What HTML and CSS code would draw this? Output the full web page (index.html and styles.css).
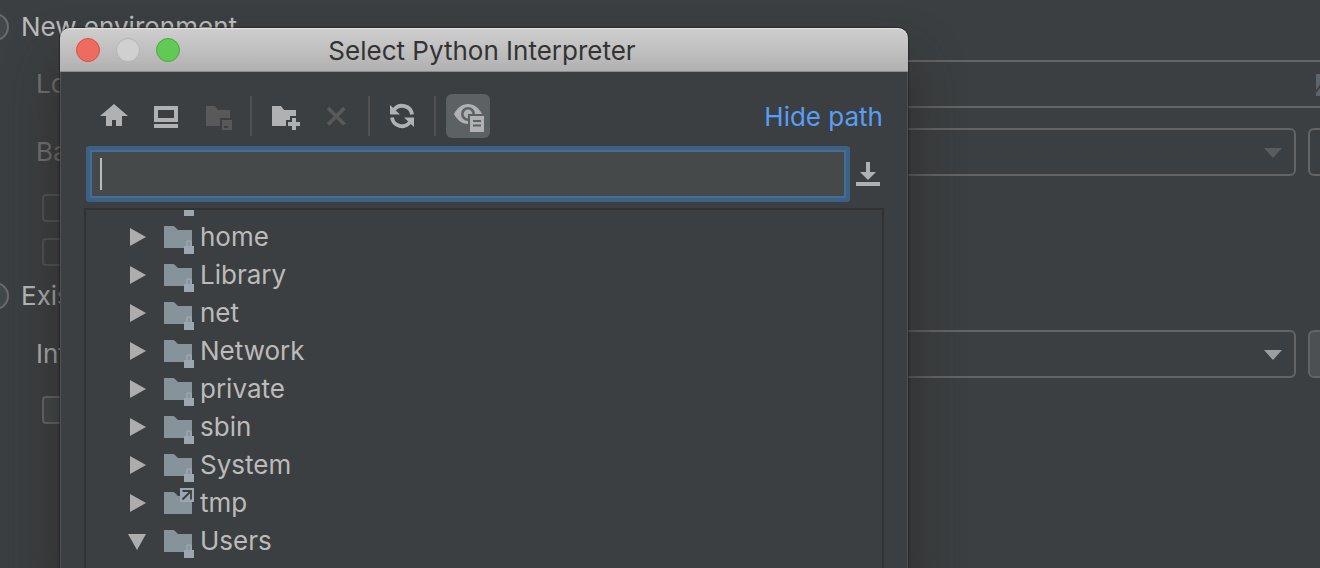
FILE: index.html
```
<!DOCTYPE html>
<html lang="en">
<head>
    <meta charset="UTF-8">
    <meta name="viewport" content="width=device-width, initial-scale=1.0">
    <title>Select Python Interpreter</title>
    <link rel="stylesheet" href="styles.css">
</head>
<body>
    <!-- Shared shapes for the tree -->
    <svg class="defs" width="0" height="0" aria-hidden="true">
        <symbol id="folder-locked" viewBox="0 0 32 38">
            <path fill="#87939a" d="M2 8H11Q12 8 13 9L16 12H30V30H2Z"/>
            <path fill="none" stroke="#9aa7b0" stroke-width="1.6" d="M24.8 29V25Q24.8 22.8 27 22.8T29.2 25V29"/>
            <path fill="#9aa7b0" d="M22 28H32V36H22Z"/>
        </symbol>
        <symbol id="folder-link" viewBox="0 0 32 38">
            <path fill="#87939a" d="M2 8H11Q12 8 13 9L16 12H30V30H2Z"/>
            <path fill="#9aa7b0" d="M18 4H32V18H18Z"/>
            <path fill="none" stroke="#3c3f41" stroke-width="1.8" d="M20.5 15.5L28.5 7.5M20.5 7H29V15.5"/>
        </symbol>
        <symbol id="arrow-right" viewBox="0 0 20 20">
            <path fill="#adadad" d="M2 1L18 10L2 19Z"/>
        </symbol>
        <symbol id="arrow-down" viewBox="0 0 20 20">
            <path fill="#adadad" d="M0 3H18L9 19Z"/>
        </symbol>
        <symbol id="combo-arrow" viewBox="0 0 18 10">
            <path fill="currentColor" d="M0 0H18L9 10Z"/>
        </symbol>
    </svg>

    <form class="settings">
        <div class="choice">
            <input type="radio" name="env" id="env-new">
            <label for="env-new">New environment</label>
        </div>
        <div class="field field-wide disabled">
            <label for="location">Location:</label>
            <div class="field-box">
                <input type="text" id="location" disabled>
                <svg class="browse" width="24" height="22" viewBox="0 0 24 22"><path fill="#5b666c" d="M0 0H24V22H0Z"/><path stroke="#3c3f41" stroke-width="2" d="M0 18L10 4"/></svg>
            </div>
        </div>
        <div class="field disabled">
            <label for="base">Base interpreter:</label>
            <div class="field-box">
                <select id="base" disabled></select>
                <svg class="combo-arrow" width="18" height="10"><use href="#combo-arrow"/></svg>
            </div>
            <button type="button" class="more" aria-label="Browse base interpreter" disabled></button>
        </div>
        <div class="check disabled">
            <input type="checkbox" id="inherit" aria-label="Inherit global site-packages" disabled>
        </div>
        <div class="check check-next disabled">
            <input type="checkbox" id="available" aria-label="Make available to all projects" disabled>
        </div>
        <div class="choice choice-next">
            <input type="radio" name="env" id="env-existing">
            <label for="env-existing">Existing environment</label>
        </div>
        <div class="field">
            <label for="interpreter">Interpreter:</label>
            <div class="field-box">
                <select id="interpreter"></select>
                <svg class="combo-arrow" width="18" height="10"><use href="#combo-arrow"/></svg>
            </div>
            <button type="button" class="more" aria-label="Browse interpreter"></button>
        </div>
        <div class="check">
            <input type="checkbox" id="available-existing" aria-label="Make available to all projects">
        </div>
    </form>

    <div class="dialog" role="dialog" aria-labelledby="dialog-title">
        <header class="titlebar">
            <div class="lights">
                <button class="light close" aria-label="Close"></button>
                <button class="light minimize" aria-label="Minimize" disabled></button>
                <button class="light zoom" aria-label="Zoom"></button>
            </div>
            <h1 id="dialog-title">Select Python Interpreter</h1>
        </header>

        <div class="toolbar">
            <button class="tool" aria-label="Home">
                <svg viewBox="0 0 32 32"><path d="M16 4L30 16H24V26H18V20H14V26H8V16H2Z"/></svg>
            </button>
            <button class="tool" aria-label="Desktop">
                <svg viewBox="0 0 32 32"><path fill-rule="evenodd" d="M4 6H28V22H4ZM8 10V18H24V10ZM4 24H28V28H4Z"/></svg>
            </button>
            <button class="tool" aria-label="Project directory" disabled>
                <svg viewBox="0 0 32 32"><path fill-rule="evenodd" d="M4 6H13L16 10H28V18H18V26H4ZM20 20H30V30H20ZM22 26V28H26V26Z"/></svg>
            </button>
            <span class="separator"></span>
            <button class="tool" aria-label="New folder">
                <svg viewBox="0 0 32 32"><path d="M4 6H13L16 10H28V16H22V20H18V26H4ZM24 18H28V22H32V26H28V30H24V26H20V22H24Z"/></svg>
            </button>
            <button class="tool" aria-label="Delete" disabled>
                <svg viewBox="0 0 32 32"><path fill="none" stroke="currentColor" stroke-width="3.6" d="M8 8L24.5 24.5M24.5 8L8 24.5"/></svg>
            </button>
            <span class="separator"></span>
            <button class="tool" aria-label="Refresh">
                <svg viewBox="0 0 32 32">
                    <path d="M4 5V14.5H14ZM28 27V17.5H18Z"/>
                    <path fill="none" stroke="currentColor" stroke-width="3.8" d="M26 14.5A10.1 10.1 0 0 0 8 9.8M6 17.5A10.1 10.1 0 0 0 24 22.2"/>
                </svg>
            </button>
            <span class="separator"></span>
            <button class="tool active" aria-label="Show hidden files" aria-pressed="true">
                <svg viewBox="0 0 32 32">
                    <path d="M2 14C5 8 10 4 16 4S27 8 30 14C27 20 22 24 16 24S5 20 2 14Z"/>
                    <circle class="cut" cx="16" cy="14" r="7"/>
                    <circle cx="16" cy="14" r="4.4"/>
                    <path class="cut" d="M16 14H32V32H16Z"/>
                    <path fill-rule="evenodd" d="M18 16H32V32H18ZM21 20V22H29V20ZM21 24.5V26.5H29V24.5Z"/>
                </svg>
            </button>
            <a href="#path" class="hide-path">Hide path</a>
        </div>

        <div class="path-row">
            <div class="path-box">
                <input type="text" id="path" aria-label="Path">
                <span class="caret"></span>
            </div>
            <button class="history" aria-label="Recent paths">
                <svg width="24" height="24" viewBox="0 0 24 24"><path d="M10 0H14V10H20L12 18L4 10H10ZM0 20H24V24H0Z"/></svg>
            </button>
        </div>

        <ul class="tree">
            <li class="scrolled">
                <svg class="icon"><use href="#folder-locked"/></svg>
            </li>
            <li>
                <button class="toggle" aria-label="Expand home"><svg><use href="#arrow-right"/></svg></button>
                <svg class="icon"><use href="#folder-locked"/></svg>
                <span>home</span>
            </li>
            <li>
                <button class="toggle" aria-label="Expand Library"><svg><use href="#arrow-right"/></svg></button>
                <svg class="icon"><use href="#folder-locked"/></svg>
                <span>Library</span>
            </li>
            <li>
                <button class="toggle" aria-label="Expand net"><svg><use href="#arrow-right"/></svg></button>
                <svg class="icon"><use href="#folder-locked"/></svg>
                <span>net</span>
            </li>
            <li>
                <button class="toggle" aria-label="Expand Network"><svg><use href="#arrow-right"/></svg></button>
                <svg class="icon"><use href="#folder-locked"/></svg>
                <span>Network</span>
            </li>
            <li>
                <button class="toggle" aria-label="Expand private"><svg><use href="#arrow-right"/></svg></button>
                <svg class="icon"><use href="#folder-locked"/></svg>
                <span>private</span>
            </li>
            <li>
                <button class="toggle" aria-label="Expand sbin"><svg><use href="#arrow-right"/></svg></button>
                <svg class="icon"><use href="#folder-locked"/></svg>
                <span>sbin</span>
            </li>
            <li>
                <button class="toggle" aria-label="Expand System"><svg><use href="#arrow-right"/></svg></button>
                <svg class="icon"><use href="#folder-locked"/></svg>
                <span>System</span>
            </li>
            <li>
                <button class="toggle" aria-label="Expand tmp"><svg><use href="#arrow-right"/></svg></button>
                <svg class="icon"><use href="#folder-link"/></svg>
                <span>tmp</span>
            </li>
            <li>
                <button class="toggle" aria-label="Collapse Users"><svg><use href="#arrow-down"/></svg></button>
                <svg class="icon"><use href="#folder-locked"/></svg>
                <span>Users</span>
            </li>
        </ul>
    </div>
</body>
</html>
```
FILE: styles.css
```
* {
    box-sizing: border-box;
}
body {
    position: relative;
    margin: 0;
    min-height: 100vh;
    overflow: hidden;
    background-color: #3c3f41;
    color: #bbbbbb;
    font-family: Inter, "Liberation Sans", sans-serif;
    font-size: 26px;
    line-height: 28px;
}
button {
    padding: 0;
    border: none;
    background: none;
    color: inherit;
}
svg {
    display: block;
    fill: currentColor;
}
.defs {
    position: absolute;
}

/* Settings page behind the dialog */
.settings {
    padding-top: 13px;
    margin-left: -19px;
}
.choice {
    display: flex;
    align-items: center;
    gap: 12px;
}
.choice-next {
    margin-top: 16px;
}
.choice input,
.check input {
    appearance: none;
    display: block;
    width: 28px;
    height: 28px;
    margin: 0;
    border: 2px solid #6b6b6b;
    background-color: #43494a;
}
.choice input {
    border-radius: 50%;
}
.check {
    margin: 18px 0 0 61px;
}
.check-next {
    margin-top: 16px;
}
.check input {
    border-radius: 4px;
}
.check.disabled input {
    border-color: #545556;
    background-color: transparent;
}
.field {
    display: grid;
    grid-template-columns: 240px 1fr 48px;
    column-gap: 12px;
    align-items: center;
    margin: 20px -36px 0 55px;
}
.field-wide {
    grid-template-columns: 240px 1fr;
    margin-top: 19px;
}
.field.disabled {
    color: #777777;
}
.field-box {
    position: relative;
}
.field-box input,
.field-box select {
    appearance: none;
    display: block;
    width: 100%;
    height: 48px;
    border: 2px solid #646464;
    border-radius: 6px;
    background-color: transparent;
    opacity: 1;
}
.browse {
    position: absolute;
    top: 14px;
    right: 16px;
}
.combo-arrow {
    position: absolute;
    top: 20px;
    right: 14px;
    color: #9c9ea0;
}
.disabled .combo-arrow {
    color: #595b5c;
}
.more {
    height: 48px;
    border: 2px solid #646464;
    border-radius: 6px;
    background-color: #4c5052;
}
.disabled .more {
    background-color: transparent;
}

/* Dialog */
.dialog {
    position: absolute;
    top: 28px;
    bottom: 0;
    left: 60px;
    right: 412px;
    display: flex;
    flex-direction: column;
    border-radius: 10px 10px 0 0;
    background-color: #3c3f41;
    box-shadow: inset 1px 0 #505355, inset -1px 0 #505355, 0 0 1px 1px rgba(0, 0, 0, 0.3), 0 36px 50px rgba(40, 40, 40, 0.85);
}
.titlebar {
    display: grid;
    grid-template-columns: 120px 1fr 124px;
    align-items: center;
    height: 44px;
    padding: 0 16px;
    border-top: 1px solid #e4e4e4;
    border-bottom: 1px solid #8c8c8c;
    border-radius: 10px 10px 0 0;
    background: linear-gradient(#cecece, #b1b1b1);
}
.lights {
    display: flex;
    gap: 16px;
}
.light {
    width: 24px;
    height: 24px;
    border: 1px solid #d8524a;
    border-radius: 50%;
    background-color: #ed6b5f;
}
.light.minimize {
    border-color: #b4b4b4;
    background-color: #d0d0d0;
}
.light.zoom {
    border-color: #4ea73f;
    background-color: #61c955;
}
.titlebar h1 {
    margin: 0;
    padding-top: 2px;
    color: #333333;
    font-size: 26px;
    font-weight: 400;
    text-align: center;
    white-space: nowrap;
}
.toolbar {
    display: flex;
    align-items: center;
    gap: 8px;
    padding: 22px 25px 8px 32px;
}
.tool {
    width: 44px;
    height: 44px;
    padding: 6px;
    border-radius: 6px;
    color: #afb1b3;
}
.tool:disabled {
    color: #595959;
}
.tool.active {
    background-color: #5c6164;
}
.tool .cut {
    fill: #5c6164;
}
.separator {
    width: 2px;
    height: 40px;
    margin: 0 2px;
    background-color: #515151;
}
.hide-path {
    margin-left: auto;
    padding-top: 2px;
    color: #589df6;
    text-decoration: none;
}
.path-row {
    display: flex;
    align-items: center;
    gap: 10px;
    padding: 4px 28px 10px 30px;
}
.path-box {
    position: relative;
    flex: 1;
}
.path-box input {
    display: block;
    width: 100%;
    height: 48px;
    padding: 0 8px;
    border: 2px solid #466d94;
    border-radius: 1px;
    outline: none;
    background-color: #45494a;
    box-shadow: 0 0 0 4px #3d6185;
    color: #bbbbbb;
    font: inherit;
}
.caret {
    position: absolute;
    top: 8px;
    left: 10px;
    width: 2px;
    height: 32px;
    background-color: #bbbbbb;
}
.history {
    color: #afb1b3;
}
.tree {
    flex: 1;
    margin: 0 24px;
    padding: 0;
    border: 2px solid #323232;
    border-bottom: none;
    overflow: hidden;
    list-style: none;
}
.tree li {
    display: flex;
    align-items: center;
    height: 38px;
    padding-left: 42px;
}
.tree .scrolled {
    margin-top: -30px;
    padding-left: 76px;
}
.toggle {
    width: 20px;
    height: 20px;
    margin-right: 14px;
}
.toggle svg {
    width: 20px;
    height: 20px;
}
.icon {
    width: 32px;
    height: 38px;
    margin-right: 6px;
}
```
